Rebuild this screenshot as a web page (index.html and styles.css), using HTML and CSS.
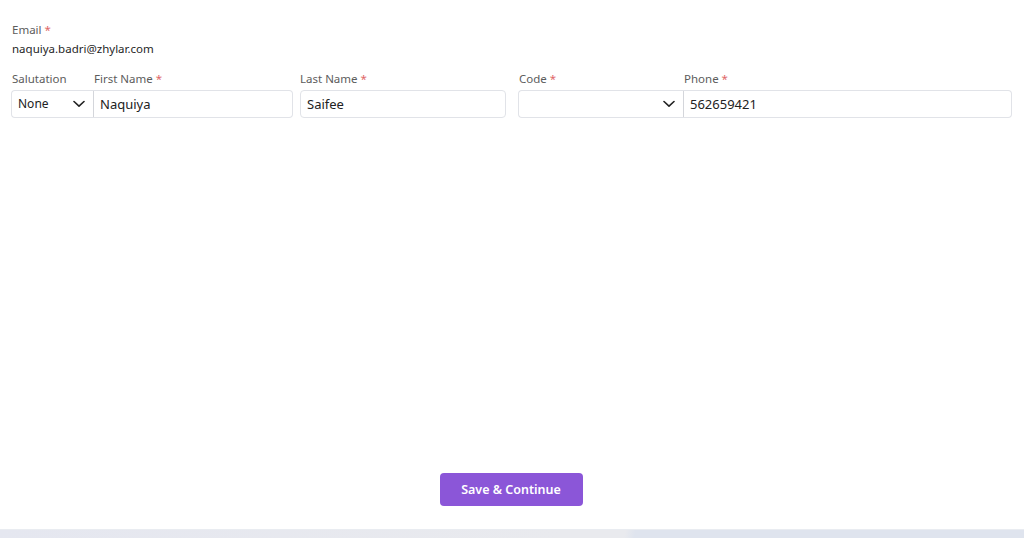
FILE: index.html
```html
<!DOCTYPE html>
<html lang="en">
<head>
<meta charset="utf-8">
<title>Profile</title>
<link rel="stylesheet" href="styles.css">
</head>
<body>
<div class="page">
  <main class="form">
    <div class="field email">
      <div class="label">Email <span class="req">*</span></div>
      <div class="value">naquiya.badri@zhylar.com</div>
    </div>
    <div class="row">
      <div class="group name-group">
        <div class="sub sal">
          <div class="label">Salutation</div>
          <div class="box select left">
            <span class="text small">None</span>
            <svg class="chev" viewBox="0 0 12 8" width="12" height="8"><path d="M1 1.5 L6 6.2 L11 1.5" fill="none" stroke="#222" stroke-width="1.6" stroke-linecap="round" stroke-linejoin="round"/></svg>
          </div>
        </div>
        <div class="sub first">
          <div class="label">First Name <span class="req">*</span></div>
          <div class="box input right"><span class="text">Naquiya</span></div>
        </div>
      </div>
      <div class="field last">
        <div class="label">Last Name <span class="req">*</span></div>
        <div class="box input"><span class="text">Saifee</span></div>
      </div>
      <div class="group phone-group">
        <div class="sub code">
          <div class="label">Code <span class="req">*</span></div>
          <div class="box select left">
            <span class="text small"></span>
            <svg class="chev" viewBox="0 0 12 8" width="12" height="8"><path d="M1 1.5 L6 6.2 L11 1.5" fill="none" stroke="#222" stroke-width="1.6" stroke-linecap="round" stroke-linejoin="round"/></svg>
          </div>
        </div>
        <div class="sub phone">
          <div class="label">Phone <span class="req">*</span></div>
          <div class="box input right"><span class="text">562659421</span></div>
        </div>
      </div>
    </div>
  </main>
  <div class="actions">
    <button class="btn" type="button">Save &amp; Continue</button>
  </div>
  <footer class="strip"></footer>
</div>
</body>
</html>
```

FILE: styles.css
```css
* { box-sizing: border-box; }
html, body { margin: 0; padding: 0; background: #fff; }
body {
  font-family: "Noto Sans", "Open Sans", Arial, sans-serif;
  color: #222;
  width: 1024px;
  height: 538px;
  overflow: hidden;
}
.page {
  height: 538px;
  display: flex;
  flex-direction: column;
}
.form {
  padding: 22px 12px 0 11px;
  flex: 1;
}
.label {
  font-size: 11.5px;
  color: #5c5c5c;
  line-height: 16px;
  height: 16px;
  margin-bottom: 3px;
}
.req { color: #e06767; }
.field.email .label { padding-left: 1px; }
.value {
  font-size: 11.5px;
  color: #1f1f1f;
  line-height: 16px;
  margin-top: 2px;
  padding-left: 1px;
}
.row {
  display: flex;
  margin-top: 14px;
}
.group { display: flex; }
.name-group { width: 282px; }
.sal { width: 82px; }
.first { width: 200px; }
.last { width: 206px; margin-left: 7px; }
.phone-group { margin-left: 12px; width: 494px; }
.code { width: 165px; }
.phone { width: 329px; }
.sub .label { padding-left: 1px; }
.box {
  height: 28px;
  border: 1px solid #e1e3e8;
  border-radius: 4px;
  display: flex;
  align-items: center;
  background: #fff;
}
.box.left {
  border-right: none;
  border-top-right-radius: 0;
  border-bottom-right-radius: 0;
}
.box.right {
  border-top-left-radius: 0;
  border-bottom-left-radius: 0;
  border-left: 1px solid #d4d6db;
}
.input { padding-left: 6px; }
.text {
  font-size: 13px;
  color: #222;
  line-height: 18px;
}
.text.small { font-size: 12px; padding-left: 6px; flex: 1; }
.select { padding-right: 8px; }
.chev { display: block; }
.actions {
  display: flex;
  justify-content: center;
  padding-bottom: 23px;
}
.btn {
  width: 143px;
  height: 33px;
  border: none;
  border-radius: 4px;
  background: #8b56d8;
  color: #fff;
  font-family: "Noto Sans", "Open Sans", Arial, sans-serif;
  font-size: 12.5px;
  font-weight: 600;
  margin-left: -2px;
  cursor: pointer;
}
.strip {
  height: 9px;
  border-top: 1px solid #e9ecf1;
  background: linear-gradient(100deg, #e5e7f0 0%, #e9eaee 55%, #e9eaee 61%, #dfe4ee 62%, #dfe4ee 100%);
}
```
